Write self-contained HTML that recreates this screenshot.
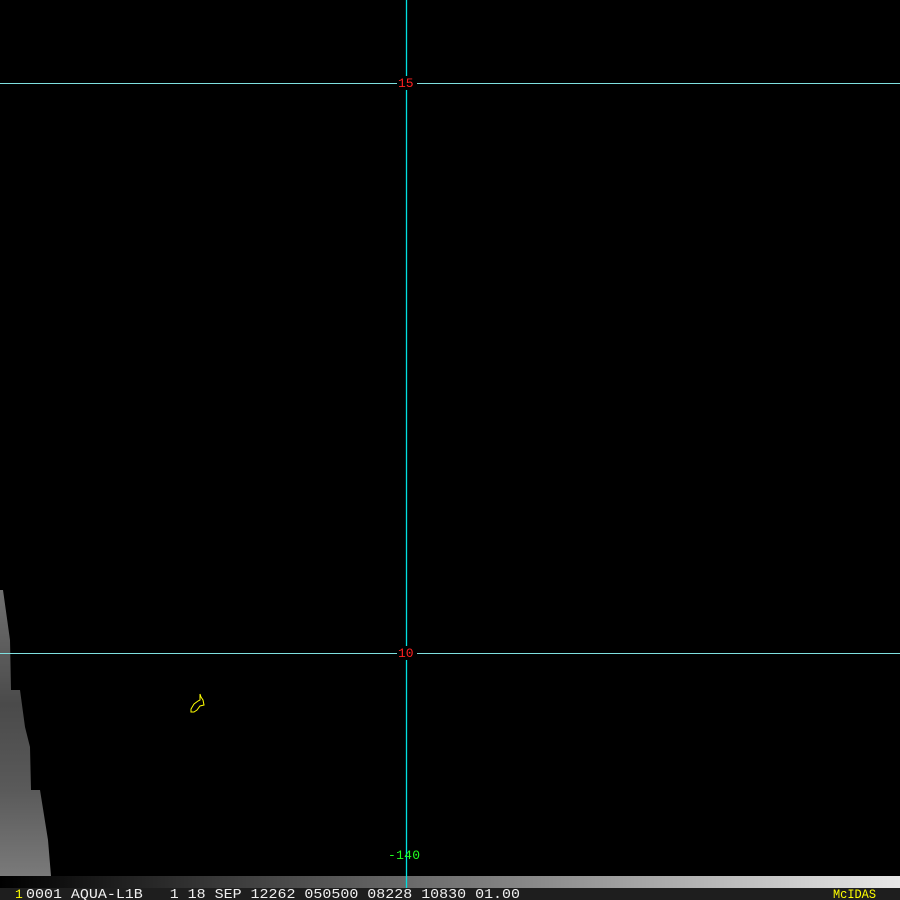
<!DOCTYPE html>
<html><head><style>
html,body{margin:0;padding:0;background:#000;width:900px;height:900px;overflow:hidden;position:relative;font-family:"Liberation Mono",monospace;}
.a{position:absolute}
</style></head><body>
<svg class="a" style="left:0;top:0" width="900" height="900">
<defs>
<linearGradient id="sw" x1="0" y1="0" x2="0" y2="1">
<stop offset="0" stop-color="#707070"/><stop offset="0.4" stop-color="#4a4a4a"/><stop offset="0.7" stop-color="#5a5a5a"/><stop offset="1" stop-color="#7a7a7a"/>
</linearGradient>
<linearGradient id="bar" x1="0" y1="0" x2="1" y2="0">
<stop offset="0" stop-color="#000"/><stop offset="1" stop-color="#e8e8e8"/>
</linearGradient>
</defs>
<polygon points="0,590 3,590 10,640 11,690 20,690 25,727 30,747 31,790 40,790 48,840 51,876 0,876" fill="url(#sw)"/>
<rect x="0" y="876" width="900" height="12" fill="url(#bar)"/>
<rect x="0" y="888" width="900" height="12" fill="#1e1e1e"/>
<line x1="0" y1="83.5" x2="900" y2="83.5" stroke="#7fe0e0" stroke-width="1"/>
<line x1="0" y1="653.5" x2="900" y2="653.5" stroke="#7fe0e0" stroke-width="1"/>
<line x1="406.5" y1="0" x2="406.5" y2="888" stroke="#00e0e0" stroke-width="1.3"/>
<rect x="397" y="76" width="20" height="14" fill="#000"/>
<rect x="397" y="646" width="20" height="14" fill="#000"/>
<text x="398" y="87" fill="#ff2020" font-size="13" font-family="Liberation Mono">15</text>
<text x="398" y="657" fill="#ff2020" font-size="13" font-family="Liberation Mono">10</text>
<text x="388" y="859" fill="#20ff20" font-size="13" font-family="Liberation Mono" textLength="32">-140</text>
<path d="M200,694 L201,697 L203,700 L204,705 L200,706 L197,710 L194,712 L191,712 L191,709 L194,704 L198,701 L200,700 Z" fill="none" stroke="#ffff00" stroke-width="1"/>
<text x="15" y="898" fill="#ffff00" font-size="13" font-family="Liberation Mono">1</text>
<text x="26" y="898" fill="#f0f0f0" font-size="14" font-family="Liberation Mono" xml:space="preserve" textLength="494" lengthAdjust="spacingAndGlyphs">0001 AQUA-L1B   1 18 SEP 12262 050500 08228 10830 01.00</text>
<text x="833" y="898" fill="#ffff00" font-size="13" font-family="Liberation Mono" textLength="43" lengthAdjust="spacingAndGlyphs">McIDAS</text>
</svg>
</body></html>
